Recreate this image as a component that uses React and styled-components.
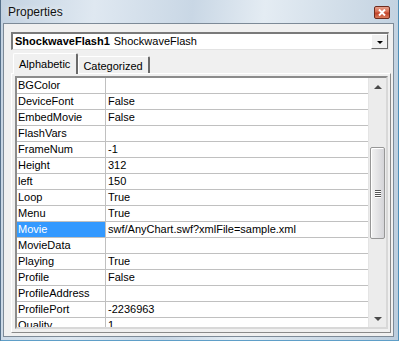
import React from 'react'
import styled, { createGlobalStyle } from 'styled-components'

const GlobalStyle = createGlobalStyle`
  html, body {
    margin: 0;
    padding: 0;
    overflow: hidden;
  }
  body {
    font-family: "Liberation Sans", Arial, sans-serif;
  }
`;

const Window = styled.div`
  width: 399px;
  height: 341px;
  box-sizing: border-box;
  display: flex;
  flex-direction: column;
  background: linear-gradient(95deg, #c3d2e1 0%, #dfe8f1 22%, #c9d7e5 45%, #e4ecf3 62%, #bccddd 100%);
  border-left: 1px solid #56708a;
  border-right: 1px solid #4f8fb8;
  border-bottom: 1px solid #5f9fc8;
`;

const TitleBar = styled.div`
  height: 23px;
  display: flex;
  align-items: center;
  justify-content: space-between;
  padding: 0 8px 0 7px;
  flex-shrink: 0;
`;

const Title = styled.span`
  font-size: 12px;
  color: #111;
  text-shadow: 0 0 6px rgba(255, 255, 255, 0.9);
  margin-top: 1px;
`;

const CloseButton = styled.div`
  width: 14px;
  height: 11px;
  margin-top: 2px;
  border: 1px solid #6d2c1e;
  border-radius: 2px;
  background: linear-gradient(180deg, #e8a08c 0%, #d66b4f 45%, #c1432a 55%, #d97c5c 100%);
  display: flex;
  align-items: center;
  justify-content: center;
`;

const Panel = styled.div`
  flex: 1;
  margin: 0 4px 3px 2px;
  border: 1px solid #7d8a97;
  background: #f0f0f0;
  padding: 8px 2px 3px 7px;
  display: flex;
  flex-direction: column;
  min-height: 0;
`;

const Combo = styled.div`
  height: 18px;
  box-sizing: border-box;
  margin-right: 2px;
  display: flex;
  align-items: stretch;
  background: #fff;
  border-top: 2px solid #7a7a7a;
  border-left: 2px solid #7a7a7a;
  border-right: 1px solid #e3e3e3;
  border-bottom: 1px solid #e3e3e3;
`;

const ComboText = styled.div`
  flex: 1;
  font-size: 11px;
  line-height: 15px;
  padding-left: 2px;
  color: #000;
  white-space: nowrap;
`;

const ObjName = styled.b`
  font-weight: 700;
  margin-right: 4px;
`;

const DropButton = styled.div`
  width: 17px;
  box-sizing: border-box;
  background: #f0f0f0;
  border-top: 1px solid #fff;
  border-left: 1px solid #fff;
  border-right: 1px solid #696969;
  border-bottom: 1px solid #696969;
  display: flex;
  align-items: center;
  justify-content: center;
`;

const ArrowDown = styled.div`
  width: 0;
  height: 0;
  border-left: 3px solid transparent;
  border-right: 3px solid transparent;
  border-top: 3px solid #000;
  margin-top: 1px;
`;

const TabStrip = styled.div`
  margin-top: 3px;
  height: 20px;
  padding-left: 2px;
  display: flex;
  align-items: flex-end;
  position: relative;
  z-index: 1;
`;

const Tab = styled.div`
  box-sizing: border-box;
  height: ${({ $active }) => ($active ? '21px' : '17px')};
  margin-bottom: ${({ $active }) => ($active ? '-1px' : '0')};
  padding: ${({ $active }) => ($active ? '3px 6px 0 5px' : '2px 5px 0 4px')};
  font-size: 11px;
  line-height: 14px;
  color: #000;
  background: #f0f0f0;
  border-top: 1px solid #fff;
  border-left: 1px solid #fff;
  border-right: 2px solid #6a6a6a;
  border-radius: 2px 2px 0 0;
  white-space: nowrap;
`;

const TabBody = styled.div`
  flex: 1;
  min-height: 0;
  box-sizing: border-box;
  border-top: 1px solid #fff;
  border-left: 1px solid #fff;
  border-right: 1px solid #8a8a8a;
  border-bottom: 1px solid #8a8a8a;
  padding: 2px 2px 3px 3px;
  display: flex;
`;

const Grid = styled.div`
  flex: 1;
  display: flex;
  background: #fff;
  border-top: 2px solid #8c8c8c;
  border-left: 2px solid #8c8c8c;
  border-right: 2px solid #d8d8d8;
  border-bottom: 2px solid #d8d8d8;
  overflow: hidden;
`;

const Rows = styled.div`
  flex: 1;
  overflow: hidden;
`;

const Row = styled.div`
  height: 16px;
  box-sizing: border-box;
  display: flex;
  border-bottom: 1px solid #c0c0c0;
  font-size: 11px;
  line-height: 15px;
  color: #000;
  white-space: nowrap;
`;

const NameCell = styled.div`
  width: 89px;
  flex-shrink: 0;
  padding-left: 1px;
  box-sizing: border-box;
  border-right: 1px solid #c0c0c0;
  background: ${({ $selected }) => ($selected ? '#3399ff' : 'transparent')};
  color: ${({ $selected }) => ($selected ? '#fff' : '#000')};
  overflow: hidden;
`;

const ValueCell = styled.div`
  flex: 1;
  padding-left: 2px;
  overflow: hidden;
`;

const ScrollBar = styled.div`
  width: 17px;
  flex-shrink: 0;
  background: #ececec;
  border-left: 1px solid #e4e4e4;
  display: flex;
  flex-direction: column;
`;

const ArrowBtn = styled.div`
  height: 17px;
  flex-shrink: 0;
  display: flex;
  align-items: center;
  justify-content: center;
`;

const ArrowGlyph = styled.div`
  width: 0;
  height: 0;
  border-left: 4px solid transparent;
  border-right: 4px solid transparent;
  ${({ $up }) => ($up ? 'border-bottom: 4px solid #4a4a4a;' : 'border-top: 4px solid #4a4a4a;')}
`;

const Track = styled.div`
  flex: 1;
  padding-top: 52px;
  display: flex;
  flex-direction: column;
  align-items: center;
`;

const Thumb = styled.div`
  width: 15px;
  height: 92px;
  box-sizing: border-box;
  border: 1px solid #979797;
  border-radius: 2px;
  background: linear-gradient(90deg, #f2f2f2 0%, #e4e4e6 50%, #d4d4d8 100%);
  box-shadow: inset 1px 1px 0 #fff;
  display: flex;
  flex-direction: column;
  align-items: center;
  justify-content: center;
  gap: 1px;
`;

const GripLine = styled.div`
  width: 6px;
  height: 1px;
  background: #555;
  box-shadow: 0 1px 0 #fff;
`;

const props = [
  ['BGColor', ''],
  ['DeviceFont', 'False'],
  ['EmbedMovie', 'False'],
  ['FlashVars', ''],
  ['FrameNum', '-1'],
  ['Height', '312'],
  ['left', '150'],
  ['Loop', 'True'],
  ['Menu', 'True'],
  ['Movie', 'swf/AnyChart.swf?xmlFile=sample.xml'],
  ['MovieData', ''],
  ['Playing', 'True'],
  ['Profile', 'False'],
  ['ProfileAddress', ''],
  ['ProfilePort', '-2236963'],
  ['Quality', '1'],
];

const App = () => {
  return (
    <>
      <GlobalStyle />
      <Window>
        <TitleBar>
          <Title>Properties</Title>
          <CloseButton>
            <svg width="8" height="7" viewBox="0 0 8 7">
              <path d="M1 0.5 L7 6.5 M7 0.5 L1 6.5" stroke="#fff" strokeWidth="2" />
            </svg>
          </CloseButton>
        </TitleBar>
        <Panel>
          <Combo>
            <ComboText>
              <ObjName>ShockwaveFlash1</ObjName>ShockwaveFlash
            </ComboText>
            <DropButton>
              <ArrowDown />
            </DropButton>
          </Combo>
          <TabStrip>
            <Tab $active>Alphabetic</Tab>
            <Tab>Categorized</Tab>
          </TabStrip>
          <TabBody>
            <Grid>
              <Rows>
                {props.map(([name, value]) => (
                  <Row key={name}>
                    <NameCell $selected={name === 'Movie'}>{name}</NameCell>
                    <ValueCell>{value}</ValueCell>
                  </Row>
                ))}
              </Rows>
              <ScrollBar>
                <ArrowBtn>
                  <ArrowGlyph $up />
                </ArrowBtn>
                <Track>
                  <Thumb>
                    <GripLine />
                    <GripLine />
                    <GripLine />
                    <GripLine />
                  </Thumb>
                </Track>
                <ArrowBtn>
                  <ArrowGlyph />
                </ArrowBtn>
              </ScrollBar>
            </Grid>
          </TabBody>
        </Panel>
      </Window>
    </>
  )
}

export default App
